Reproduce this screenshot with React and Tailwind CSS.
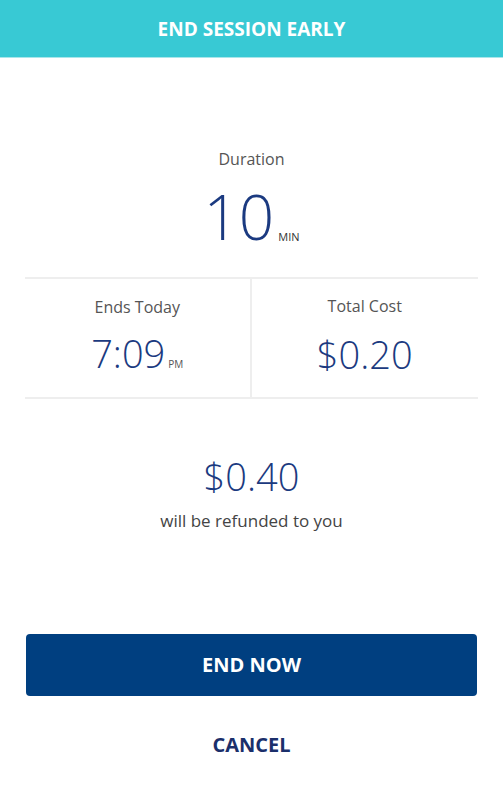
import React from 'react';

const App = () => {
    return (
        <div className="w-[503px] h-[800px] bg-white flex flex-col" style={{ fontFamily: '"Open Sans", "Liberation Sans", sans-serif' }}>
            <header className="h-[58px] bg-[#38c9d4] flex items-center justify-center border-b border-[#a9e6ea]">
                <h1 className="text-white font-bold text-[19px] mt-[2px]">END SESSION EARLY</h1>
            </header>

            <div className="flex flex-col items-center pt-[91px]">
                <p className="text-[#555] text-[16px] leading-[20px]">Duration</p>
                <div className="flex items-end mt-[20px] text-[#1b3a80]">
                    <span className="text-[62px] font-light leading-[54px]">10</span>
                    <span className="text-[11px] ml-[4px] leading-[12px] text-[#333]">MIN</span>
                </div>
            </div>

            <div className="mx-[25px] mt-[34px] border-t-2 border-b-2 border-[#eeeeee] grid grid-cols-2 h-[122px]">
                <div className="flex flex-col items-center pt-[18px] border-r-2 border-[#eeeeee]">
                    <p className="text-[#555] text-[16px] leading-[20px]">Ends Today</p>
                    <div className="flex items-end mt-[20px] text-[#1b3a80]">
                        <span className="text-[38px] font-light leading-[32px]">7:09</span>
                        <span className="text-[10px] ml-[3px] leading-[10px] text-[#555]">PM</span>
                    </div>
                </div>
                <div className="flex flex-col items-center pt-[17px]">
                    <p className="text-[#555] text-[16px] leading-[20px]">Total Cost</p>
                    <span className="text-[38px] font-light leading-[32px] mt-[22px] text-[#1b3a80]">$0.20</span>
                </div>
            </div>

            <div className="flex flex-col items-center mt-[59px]">
                <span className="text-[38px] font-light leading-[36px] text-[#1b3a80]">$0.40</span>
                <p className="text-[#444] text-[17px] leading-[20px] mt-[17px]">will be refunded to you</p>
            </div>

            <div className="px-[26px] mt-[103px]">
                <button className="w-full h-[62px] rounded-[4px] bg-[#003f80] text-white font-bold text-[20px] flex items-center justify-center">
                    END NOW
                </button>
            </div>

            <div className="flex justify-center mt-[34px]">
                <button className="text-[#1b2f6b] font-bold text-[20px]">CANCEL</button>
            </div>
        </div>
    );
};

export default App;
